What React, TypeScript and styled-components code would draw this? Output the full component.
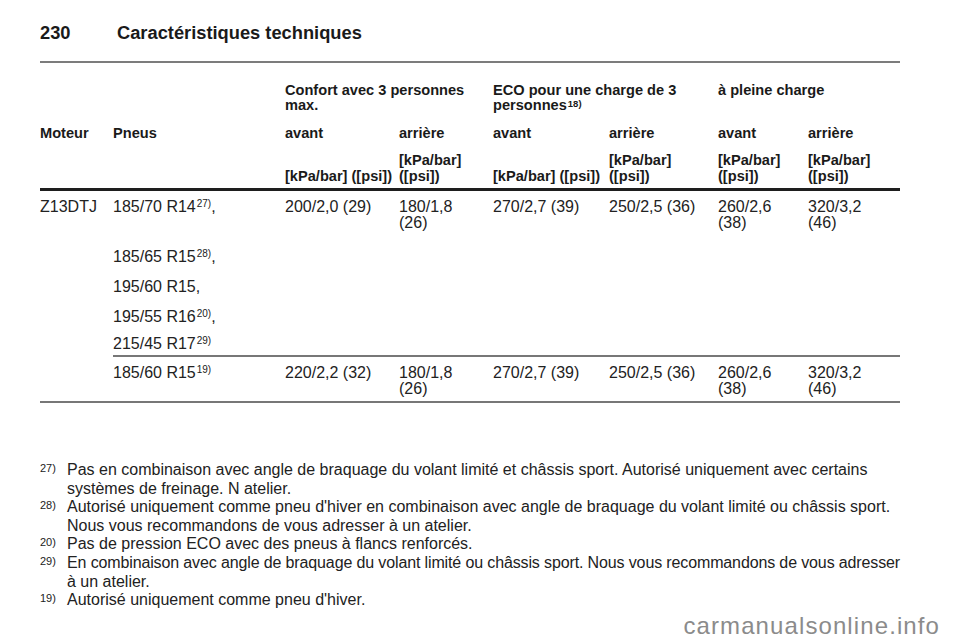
import React from "react";
import styled, { createGlobalStyle } from "styled-components";

const Global = createGlobalStyle`
  html, body { margin: 0; padding: 0; background: #fff; }
  body { font-family: "Liberation Sans", Arial, sans-serif; color: #222; }
`;

const Page = styled.div`
  position: relative;
  width: 960px;
  height: 642px;
  overflow: hidden;
  padding: 0 0 0 40px;
  box-sizing: border-box;
`;

const TitleBar = styled.header`
  display: flex;
  align-items: center;
  height: 22px;
  margin-top: 22px;
  font-size: 18.3px;
  font-weight: bold;
  line-height: 22px;
  color: #1a1a1a;
`;

const PageNum = styled.span`
  width: 77px;
`;

const TopRule = styled.div`
  width: 860px;
  height: 0;
  border-top: 2px solid #7c7c7c;
  margin-top: 17px;
`;

const COLS = "73px 172px 114px 94px 116px 109px 90px 92px";

const HeadRow = styled.div<{ $pt: number; $lh: number }>`
  display: grid;
  grid-template-columns: ${COLS};
  width: 860px;
  padding-top: ${(p) => p.$pt}px;
  font-size: 14.6px;
  font-weight: bold;
  line-height: ${(p) => p.$lh}px;
  align-items: end;
  white-space: nowrap;
  color: #1a1a1a;
`;

const HeadCell = styled.div<{ $span?: number; $start?: number; $top?: boolean }>`
  grid-column: ${(p) => (p.$start ? `${p.$start} / span ${p.$span ?? 1}` : "auto")};
  align-self: ${(p) => (p.$top ? "start" : "end")};
`;

const ThickRule = styled.div`
  width: 860px;
  border-top: 3px solid #1e1e1e;
  margin-top: 4px;
`;

const DataRow = styled.div<{ $pt: number; $pb: number }>`
  display: grid;
  grid-template-columns: ${COLS};
  width: 860px;
  padding-top: ${(p) => p.$pt}px;
  padding-bottom: ${(p) => p.$pb}px;
  font-size: 16px;
  line-height: 16px;
  align-items: start;
  white-space: nowrap;
`;

const Cell = styled.div<{ $col?: number }>`
  grid-column: ${(p) => (p.$col ? `${p.$col}` : "auto")};
`;

const TireList = styled.div`
  display: flex;
  flex-direction: column;
`;

const Tire = styled.div<{ $first?: boolean }>`
  min-height: ${(p) => (p.$first ? 32 : 16)}px;
`;

const Sup = styled.sup<{ $raise?: number; $size?: number }>`
  font-size: ${(p) => p.$size ?? 10}px;
  line-height: 0;
  vertical-align: ${(p) => p.$raise ?? 5}px;
  margin-left: 1px;
`;

const Divider = styled.div<{ $indent?: boolean }>`
  margin-left: ${(p) => (p.$indent ? 73 : 0)}px;
  width: ${(p) => (p.$indent ? 787 : 860)}px;
  border-top: 2px solid #777;
`;

const Notes = styled.section`
  margin-top: 58px;
  width: 900px;
  font-size: 16px;
  line-height: 18.6px;
`;

const Note = styled.div`
  display: grid;
  grid-template-columns: 27px 1fr;
`;

const NoteMark = styled.span`
  font-size: 11px;
  line-height: 14px;
`;

const NoteText = styled.div`
  white-space: nowrap;
`;

const NoteLine = styled.div<{ $tight?: boolean }>`
  letter-spacing: ${(p) => (p.$tight ? "-0.13px" : "0")};
`;

const Watermark = styled.div`
  position: absolute;
  right: 20px;
  bottom: 2px;
  font-size: 24px;
  letter-spacing: 1.1px;
  color: #8b8b8b;
  font-family: "Liberation Sans", Arial, sans-serif;
`;

type Tr = { text: string; sup?: string; comma?: boolean; gap: number };

const tires: Tr[] = [
  { text: "185/70 R14", sup: "27)", comma: true, gap: 0 },
  { text: "185/65 R15", sup: "28)", comma: true, gap: 18 },
  { text: "195/60 R15", comma: true, gap: 14 },
  { text: "195/55 R16", sup: "20)", comma: true, gap: 14 },
  { text: "215/45 R17", sup: "29)", gap: 11 },
];

const ValueCells = ({ vals }: { vals: string[][] }) => (
  <>
    {vals.map((lines, i) => (
      <Cell key={i} $col={i + 3}>
        {lines.map((l, j) => (
          <div key={j}>{l}</div>
        ))}
      </Cell>
    ))}
  </>
);

const row1Vals = [
  ["200/2,0 (29)"],
  ["180/1,8", "(26)"],
  ["270/2,7 (39)"],
  ["250/2,5 (36)"],
  ["260/2,6", "(38)"],
  ["320/3,2", "(46)"],
];
const row2Vals = [
  ["220/2,2 (32)"],
  ["180/1,8", "(26)"],
  ["270/2,7 (39)"],
  ["250/2,5 (36)"],
  ["260/2,6", "(38)"],
  ["320/3,2", "(46)"],
];

const units = [
  ["[kPa/bar] ([psi])"],
  ["[kPa/bar]", "([psi])"],
  ["[kPa/bar] ([psi])"],
  ["[kPa/bar]", "([psi])"],
  ["[kPa/bar]", "([psi])"],
  ["[kPa/bar]", "([psi])"],
];

const notes: { mark: string; lines: string[]; tight?: boolean }[] = [
  {
    mark: "27)",
    lines: [
      "Pas en combinaison avec angle de braquage du volant limité et châssis sport. Autorisé uniquement avec certains",
      "systèmes de freinage. N atelier.",
    ],
  },
  {
    mark: "28)",
    lines: [
      "Autorisé uniquement comme pneu d'hiver en combinaison avec angle de braquage du volant limité ou châssis sport.",
      "Nous vous recommandons de vous adresser à un atelier.",
    ],
  },
  { mark: "20)", lines: ["Pas de pression ECO avec des pneus à flancs renforcés."] },
  {
    mark: "29)",
    tight: true,
    lines: [
      "En combinaison avec angle de braquage du volant limité ou châssis sport. Nous vous recommandons de vous adresser",
      "à un atelier.",
    ],
  },
  { mark: "19)", lines: ["Autorisé uniquement comme pneu d'hiver."] },
];

export default function App() {
  return (
    <>
      <Global />
      <Page>
        <TitleBar>
          <PageNum>230</PageNum>
          <span>Caractéristiques techniques</span>
        </TitleBar>
        <TopRule />

        <HeadRow $pt={20} $lh={15}>
          <HeadCell $start={3} $span={2}>
            Confort avec 3 personnes
            <br />
            max.
          </HeadCell>
          <HeadCell $start={5} $span={2}>
            ECO pour une charge de 3
            <br />
            personnes<Sup $raise={3} $size={9.5}>18)</Sup>
          </HeadCell>
          <HeadCell $start={7} $span={2} $top>
            à pleine charge
          </HeadCell>
        </HeadRow>

        <HeadRow $pt={13} $lh={14}>
          <HeadCell>Moteur</HeadCell>
          <HeadCell>Pneus</HeadCell>
          <HeadCell>avant</HeadCell>
          <HeadCell>arrière</HeadCell>
          <HeadCell>avant</HeadCell>
          <HeadCell>arrière</HeadCell>
          <HeadCell>avant</HeadCell>
          <HeadCell>arrière</HeadCell>
        </HeadRow>

        <HeadRow $pt={12} $lh={16}>
          {units.map((lines, i) => (
            <HeadCell key={i} $start={i + 3}>
              {lines.map((l, j) => (
                <div key={j}>{l}</div>
              ))}
            </HeadCell>
          ))}
        </HeadRow>
        <ThickRule />

        <DataRow $pt={8} $pb={3}>
          <Cell $col={1}>Z13DTJ</Cell>
          <Cell $col={2}>
            <TireList>
              {tires.map((t, i) => (
                <Tire key={i} $first={i === 0} style={{ marginTop: t.gap }}>
                  {t.text}
                  {t.sup && <Sup>{t.sup}</Sup>}
                  {t.comma ? "," : ""}
                </Tire>
              ))}
            </TireList>
          </Cell>
          <ValueCells vals={row1Vals} />
        </DataRow>
        <Divider $indent />

        <DataRow $pt={8} $pb={4}>
          <Cell $col={2}>
            185/60 R15<Sup>19)</Sup>
          </Cell>
          <ValueCells vals={row2Vals} />
        </DataRow>
        <Divider />

        <Notes>
          {notes.map((n) => (
            <Note key={n.mark}>
              <NoteMark>{n.mark}</NoteMark>
              <NoteText>
                {n.lines.map((l, j) => (
                  <NoteLine key={j} $tight={n.tight && j === 0}>
                    {l}
                  </NoteLine>
                ))}
              </NoteText>
            </Note>
          ))}
        </Notes>

        <Watermark>carmanualsonline.info</Watermark>
      </Page>
    </>
  );
}
